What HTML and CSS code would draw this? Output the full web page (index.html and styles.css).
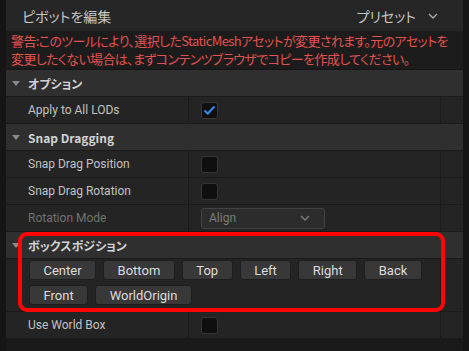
FILE: index.html
```html
<!DOCTYPE html>
<html lang="ja">
<head>
    <meta charset="UTF-8">
    <meta name="viewport" content="width=device-width, initial-scale=1.0">
    <title>ピボットを編集</title>
    <link rel="stylesheet" href="styles.css">
</head>
<body>
    <div class="panel">
        <div class="title-bar">
            <span class="title">ピボットを編集</span>
            <span class="preset">プリセット
                <svg class="chevron" width="10" height="6" viewBox="0 0 10 6"><path d="M1 1 L5 5 L9 1" fill="none" stroke="#a8a8a8" stroke-width="1.4"/></svg>
            </span>
        </div>

        <div class="warning">
            <div>警告:このツールにより、選択したStaticMeshアセットが変更されます。元のアセットを</div>
            <div>変更したくない場合は、まずコンテンツブラウザでコピーを作成してください。</div>
        </div>

        <div class="details">
            <div class="section-header"><span class="arrow"></span>オプション</div>
            <div class="row">
                <div class="row-label">Apply to All LODs</div>
                <div class="row-value"><span class="checkbox checked">
                    <svg width="13" height="10" viewBox="0 0 13 10"><path d="M1.5 5.5 L4.8 8.5 L11.5 1.5" fill="none" stroke="#2f8ff0" stroke-width="2"/></svg>
                </span></div>
                <div class="row-extra"></div>
            </div>

            <div class="section-header"><span class="arrow"></span>Snap Dragging</div>
            <div class="row">
                <div class="row-label">Snap Drag Position</div>
                <div class="row-value"><span class="checkbox"></span></div>
                <div class="row-extra"></div>
            </div>
            <div class="row">
                <div class="row-label">Snap Drag Rotation</div>
                <div class="row-value"><span class="checkbox"></span></div>
                <div class="row-extra"></div>
            </div>
            <div class="row">
                <div class="row-label disabled">Rotation Mode</div>
                <div class="row-value">
                    <div class="combo">
                        <span>Align</span>
                        <svg width="10" height="6" viewBox="0 0 10 6"><path d="M1 1 L5 5 L9 1" fill="none" stroke="#7c7c7c" stroke-width="1.4"/></svg>
                    </div>
                </div>
                <div class="row-extra"></div>
            </div>

            <div class="section-header"><span class="arrow"></span>ボックスポジション</div>
            <div class="button-row">
                <div class="button-grid">
                    <button class="pos-btn">Center</button>
                    <button class="pos-btn">Bottom</button>
                    <button class="pos-btn">Top</button>
                    <button class="pos-btn">Left</button>
                    <button class="pos-btn">Right</button>
                    <button class="pos-btn">Back</button>
                    <button class="pos-btn">Front</button>
                    <button class="pos-btn">WorldOrigin</button>
                </div>
                <div class="row-extra"></div>
            </div>
            <div class="row">
                <div class="row-label">Use World Box</div>
                <div class="row-value"><span class="checkbox"></span></div>
                <div class="row-extra"></div>
            </div>
        </div>

        <div class="highlight"></div>
    </div>
</body>
</html>
```

FILE: styles.css
```css
* {
    margin: 0;
    padding: 0;
    box-sizing: border-box;
}

body {
    font-family: Roboto, "Noto Sans CJK JP", sans-serif;
    background: #151515;
    width: 469px;
    height: 351px;
    overflow: hidden;
}

.panel {
    position: relative;
    margin-left: 6px;
    width: 457px;
    height: 351px;
    background: #1a1a1a;
}

.title-bar {
    height: 31px;
    background: #262626;
    display: flex;
    align-items: center;
    justify-content: space-between;
    padding: 0 25px 0 16px;
}

.title,
.preset {
    font-family: "Noto Sans CJK JP", sans-serif;
    font-feature-settings: "palt";
    font-size: 14px;
    color: #c4c4c4;
}

.preset {
    display: flex;
    align-items: center;
    gap: 12px;
}

.warning {
    height: 37px;
    padding: 1px 5px 0;
    background: #1c1c1c;
    font-family: "Noto Sans CJK JP", sans-serif;
    font-feature-settings: "palt";
    font-size: 13px;
    letter-spacing: -0.62px;
    line-height: 17.5px;
    white-space: nowrap;
    color: #e4524f;
    margin-bottom: 1px;
}

.details {
    border-top: 1px solid #161616;
}

.section-header {
    height: 27px;
    background: #2f2f2f;
    border-bottom: 1px solid #1a1a1a;
    display: flex;
    align-items: center;
    padding-left: 22px;
    font-family: "Noto Sans CJK JP", Roboto, sans-serif;
    font-feature-settings: "palt";
    font-size: 12px;
    font-weight: 700;
    color: #d2d2d2;
    position: relative;
}

.arrow {
    position: absolute;
    left: 6px;
    top: 11px;
    border-left: 4.5px solid transparent;
    border-right: 4.5px solid transparent;
    border-top: 5px solid #8a8a8a;
}

.row {
    height: 27px;
    display: grid;
    grid-template-columns: 183px 252px 22px;
    background: #242424;
    border-bottom: 1px solid #1a1a1a;
}

.row-label {
    display: flex;
    align-items: center;
    padding-left: 22px;
    font-size: 12px;
    color: #c2c2c2;
    border-right: 1px solid #1a1a1a;
}

.row-label.disabled {
    color: #727272;
}

.row-value {
    display: flex;
    align-items: center;
    padding-left: 12px;
    border-right: 1px solid #1a1a1a;
}

.checkbox {
    width: 17px;
    height: 17px;
    background: #0f0f0f;
    border: 1px solid #353535;
    border-radius: 3px;
    display: flex;
    align-items: center;
    justify-content: center;
}

.combo {
    width: 124px;
    height: 21px;
    background: #2c2c2c;
    border: 1px solid #424242;
    border-radius: 3px;
    display: flex;
    align-items: center;
    justify-content: space-between;
    padding: 0 14px 0 7px;
    font-size: 12px;
    color: #7c7c7c;
}

.button-row {
    height: 53px;
    display: grid;
    grid-template-columns: 435px 22px;
    background: #242424;
    border-bottom: 1px solid #1a1a1a;
}

.button-grid {
    display: flex;
    flex-wrap: wrap;
    align-content: flex-start;
    gap: 5px 7px;
    padding: 1px 0 0 23px;
    border-right: 1px solid #1a1a1a;
}

.pos-btn {
    height: 20px;
    padding: 0 13.5px;
    background: #383838;
    border: 1px solid #1e1e1e;
    border-radius: 3px;
    font-family: Roboto, sans-serif;
    font-size: 13px;
    color: #dcdcdc;
}

.highlight {
    position: absolute;
    left: 12px;
    top: 232px;
    width: 427px;
    height: 80px;
    border: 4px solid #ff0606;
    border-radius: 9px;
    pointer-events: none;
}
```
